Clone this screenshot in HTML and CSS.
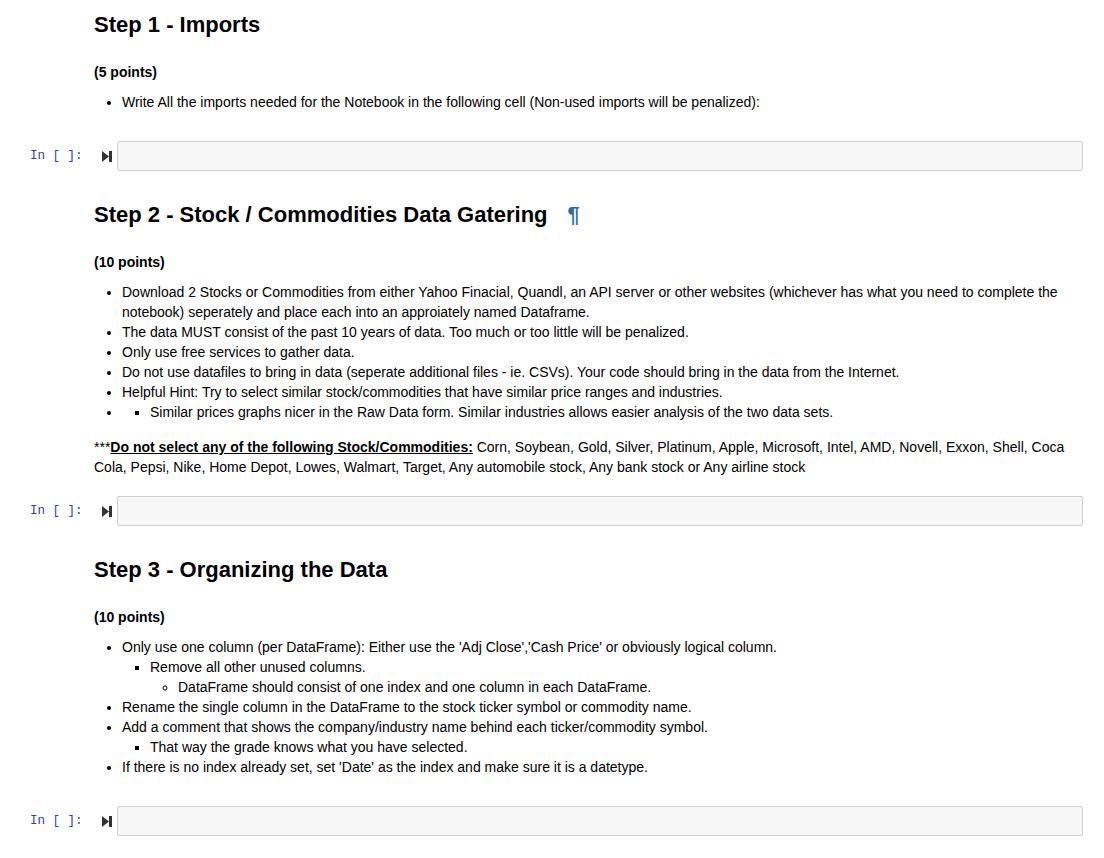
FILE: index.html
```html
<!DOCTYPE html>
<html>
<head>
<meta charset="utf-8">
<link rel="stylesheet" href="styles.css">
</head>
<body>
<div class="notebook">

  <div class="md-cell">
    <h2 class="heading">Step 1 - Imports</h2>
    <p class="points">(5 points)</p>
    <ul class="list">
      <li>Write All the imports needed for the Notebook in the following cell (Non-used imports will be penalized):</li>
    </ul>
  </div>

  <div class="code-cell">
    <div class="prompt">In&nbsp;[&nbsp;]:</div>
    <div class="run"><svg width="10" height="11" viewBox="0 0 10 11"><path d="M0 0 L7 5.5 L0 11 Z" fill="#333"/><rect x="7" y="0" width="3" height="11" fill="#333"/></svg></div>
    <div class="input"></div>
  </div>

  <div class="md-cell">
    <h2 class="heading">Step 2 - Stock / Commodities Data Gatering<span class="anchor">¶</span></h2>
    <p class="points">(10 points)</p>
    <ul class="list">
      <li>Download 2 Stocks or Commodities from either Yahoo Finacial, Quandl, an API server or other websites (whichever has what you need to complete the notebook) seperately and place each into an approiately named Dataframe.</li>
      <li>The data MUST consist of the past 10 years of data. Too much or too little will be penalized.</li>
      <li>Only use free services to gather data.</li>
      <li>Do not use datafiles to bring in data (seperate additional files - ie. CSVs). Your code should bring in the data from the Internet.</li>
      <li>Helpful Hint: Try to select similar stock/commodities that have similar price ranges and industries.</li>
      <li><ul class="sub"><li>Similar prices graphs nicer in the Raw Data form. Similar industries allows easier analysis of the two data sets.</li></ul></li>
    </ul>
    <p class="note">***<strong class="warn">Do not select any of the following Stock/Commodities:</strong> Corn, Soybean, Gold, Silver, Platinum, Apple, Microsoft, Intel, AMD, Novell, Exxon, Shell, Coca Cola, Pepsi, Nike, Home Depot, Lowes, Walmart, Target, Any automobile stock, Any bank stock or Any airline stock</p>
  </div>

  <div class="code-cell">
    <div class="prompt">In&nbsp;[&nbsp;]:</div>
    <div class="run"><svg width="10" height="11" viewBox="0 0 10 11"><path d="M0 0 L7 5.5 L0 11 Z" fill="#333"/><rect x="7" y="0" width="3" height="11" fill="#333"/></svg></div>
    <div class="input"></div>
  </div>

  <div class="md-cell">
    <h2 class="heading">Step 3 - Organizing the Data</h2>
    <p class="points">(10 points)</p>
    <ul class="list">
      <li>Only use one column (per DataFrame): Either use the 'Adj Close','Cash Price' or obviously logical column.
        <ul class="sub">
          <li>Remove all other unused columns.
            <ul class="subsub"><li>DataFrame should consist of one index and one column in each DataFrame.</li></ul>
          </li>
        </ul>
      </li>
      <li>Rename the single column in the DataFrame to the stock ticker symbol or commodity name.</li>
      <li>Add a comment that shows the company/industry name behind each ticker/commodity symbol.
        <ul class="sub"><li>That way the grade knows what you have selected.</li></ul>
      </li>
      <li>If there is no index already set, set 'Date' as the index and make sure it is a datetype.</li>
    </ul>
  </div>

  <div class="code-cell">
    <div class="prompt">In&nbsp;[&nbsp;]:</div>
    <div class="run"><svg width="10" height="11" viewBox="0 0 10 11"><path d="M0 0 L7 5.5 L0 11 Z" fill="#333"/><rect x="7" y="0" width="3" height="11" fill="#333"/></svg></div>
    <div class="input"></div>
  </div>

</div>
</body>
</html>
```

FILE: styles.css
```css
html, body {
  margin: 0;
  padding: 0;
  background: #fff;
}

body {
  font-family: "Liberation Sans", Arial, sans-serif;
  font-size: 14px;
  line-height: 20px;
  color: #000;
}

.notebook {
  display: flex;
  flex-direction: column;
}

.md-cell {
  padding: 12px 21px 19px 94px;
}

.heading {
  margin: 0 0 24px 0;
  font-size: 22px;
  line-height: 26px;
  font-weight: bold;
}

.anchor {
  color: #2f6ca6;
  padding-left: 20px;
}

.points {
  margin: 0 0 10px 0;
  font-weight: bold;
}

.list {
  margin: 0 0 10px 0;
  padding-left: 28px;
  list-style: disc;
}

.list .sub {
  margin: 0;
  padding-left: 28px;
  list-style: square;
}

.list .subsub {
  margin: 0;
  padding-left: 28px;
  list-style: circle;
}

.note {
  margin: 15px 0 0 0;
}

.warn {
  text-decoration: underline;
}

.code-cell {
  display: flex;
  align-items: center;
  margin-bottom: 19px;
  padding-right: 21px;
}

.prompt {
  width: 82px;
  padding-left: 30px;
  box-sizing: border-box;
  font-family: "Liberation Mono", "DejaVu Sans Mono", monospace;
  font-size: 12.5px;
  color: #303f9f;
  white-space: nowrap;
}

.run {
  width: 35px;
  box-sizing: border-box;
  padding-left: 20px;
  display: flex;
  align-items: center;
}

.input {
  flex: 1;
  height: 30px;
  box-sizing: border-box;
  background: #f7f7f7;
  border: 1px solid #cfcfcf;
  border-radius: 2px;
}
```
